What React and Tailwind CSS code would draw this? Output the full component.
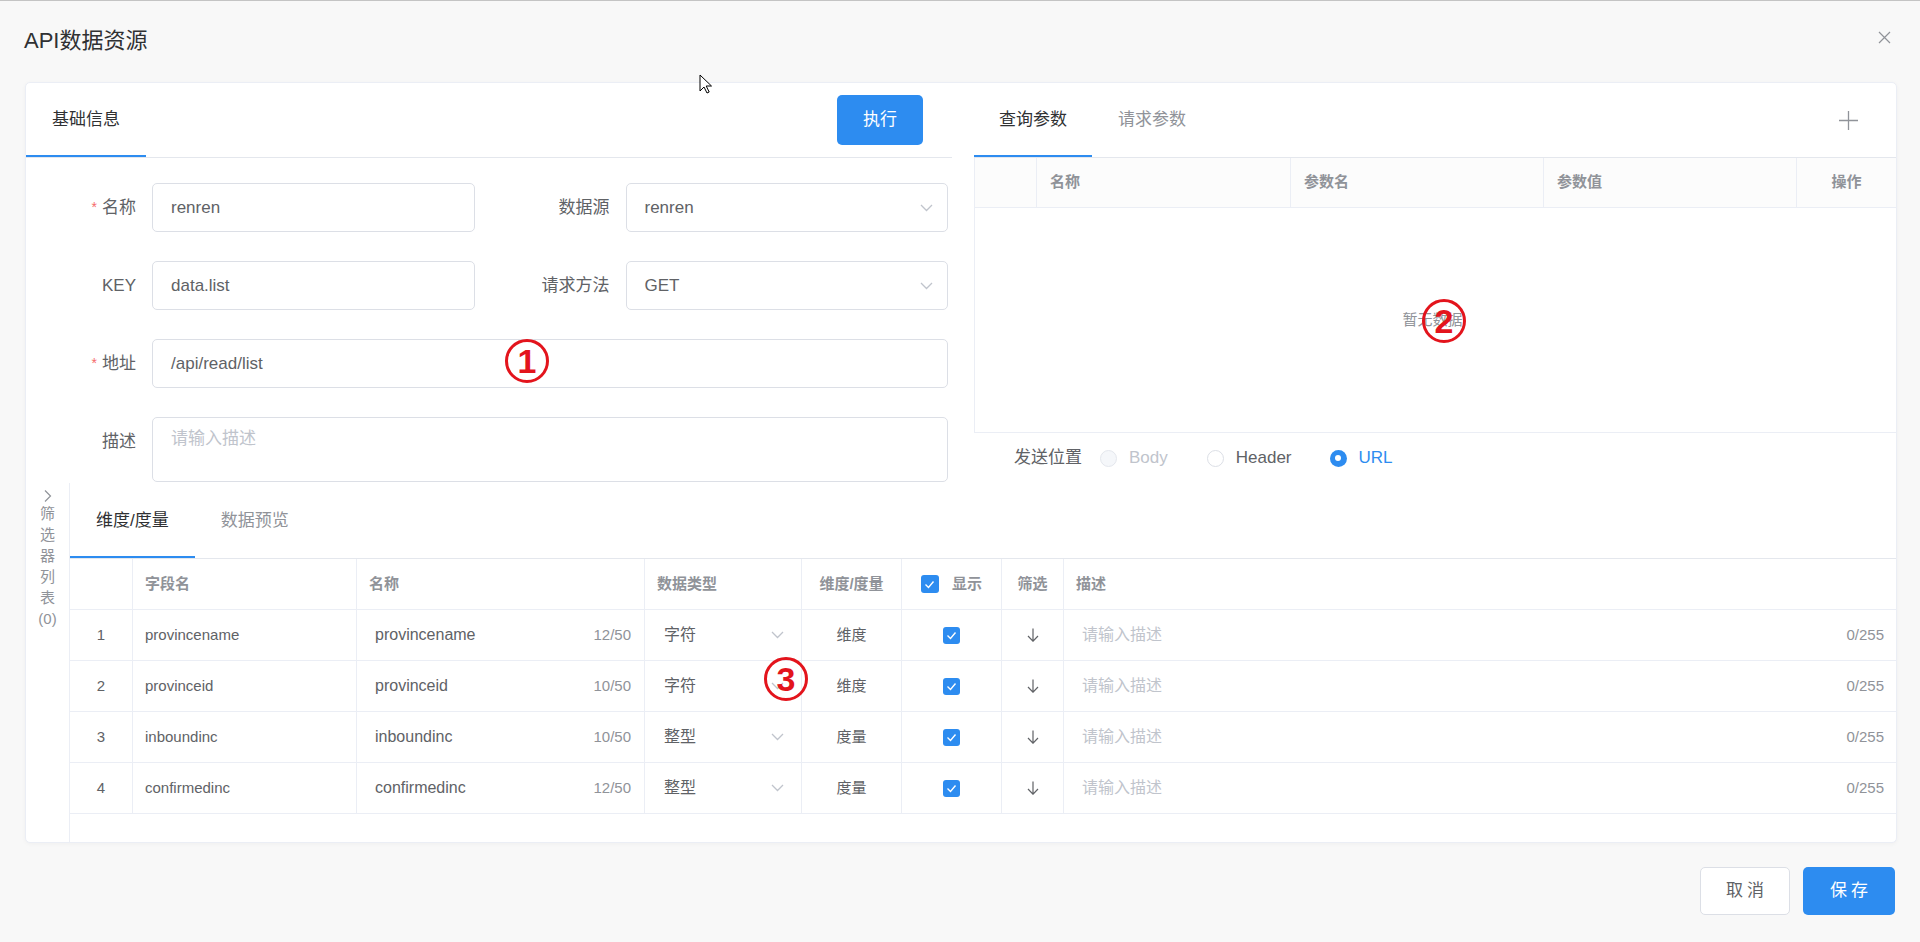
import React from "react";

const ChevronDown = ({ className = "" }) => (
  <svg className={className} width="13" height="8" viewBox="0 0 13 8" fill="none">
    <path d="M1 1l5.5 5.5L12 1" stroke="#c0c4cc" strokeWidth="1.3" />
  </svg>
);

const Check = ({ size = 17 }) => (
  <span
    className="inline-flex items-center justify-center rounded-[3px] bg-[#2d8cf0]"
    style={{ width: size, height: size }}
  >
    <svg width="11" height="9" viewBox="0 0 11 9" fill="none">
      <path d="M1.5 4.5l3 3 5-6" stroke="#fff" strokeWidth="1.4" />
    </svg>
  </span>
);

const ArrowDown = () => (
  <svg width="12" height="14" viewBox="0 0 12 14" fill="none">
    <path d="M6 0.5v12.5M1 8l5 5.2L11 8" stroke="#606266" strokeWidth="1.2" />
  </svg>
);

const Marker = ({ n, className }) => (
  <div
    className={
      "absolute w-[44px] h-[44px] rounded-full border-[3px] border-[#e3141c] flex items-center justify-center text-[#e3141c] text-[34px] leading-none font-semibold font-['Liberation_Sans',sans-serif] " +
      className
    }
  >
    {n}
  </div>
);

const Field = ({ label, required, children, full }) => (
  <div className={"flex " + (full ? "col-span-2" : "")}>
    <div className="w-[126px] h-[49px] shrink-0 flex items-center justify-end pr-[16px] text-[17px] text-[#606266]">
      {required && <span className="text-[#f56c6c] mr-[5px] text-[14px]">*</span>}
      {label}
    </div>
    <div className="flex-1">{children}</div>
  </div>
);

const Input = ({ value }) => (
  <div className="h-[49px] border border-[#dcdfe6] rounded-[5px] pl-[18px] flex items-center text-[17px] text-[#606266]">
    {value}
  </div>
);

const Select = ({ value }) => (
  <div className="h-[49px] border border-[#dcdfe6] rounded-[5px] pl-[18px] pr-[14px] flex items-center justify-between text-[17px] text-[#606266]">
    <span>{value}</span>
    <ChevronDown />
  </div>
);

const rows = [
  { id: 1, field: "provincename", count: "12/50", type: "字符", kind: "维度" },
  { id: 2, field: "provinceid", count: "10/50", type: "字符", kind: "维度" },
  { id: 3, field: "inboundinc", count: "10/50", type: "整型", kind: "度量" },
  { id: 4, field: "confirmedinc", count: "12/50", type: "整型", kind: "度量" },
];

export default function App() {
  return (
    <div className="relative w-[1920px] h-[942px] overflow-hidden bg-[#f8f8f8] border-t border-[#c4c4c4] font-['Liberation_Sans','Noto_Sans_CJK_SC',sans-serif]">
      {/* header */}
      <div className="h-[81px] flex items-center justify-between pl-[24px] pr-[29px]">
        <div className="text-[22px] text-[#303133] -mt-[2px]">API数据资源</div>
        <svg width="13" height="13" viewBox="0 0 13 13" className="-mt-[8px]">
          <path d="M1 1l11 11M12 1L1 12" stroke="#909399" strokeWidth="1.2" />
        </svg>
      </div>

      {/* card */}
      <div className="ml-[25px] w-[1872px] h-[761px] bg-white border border-[#ebeef5] rounded-[5px] shadow-[0_1px_4px_rgba(0,0,0,0.04)] flex flex-col">
        <div className="h-[400px] flex">
          {/* left panel */}
          <div className="w-[926px] shrink-0 flex flex-col">
            <div className="h-[75px] border-b border-[#e4e7ed] flex items-center justify-between pr-[29px]">
              <div className="relative h-full px-[26px] flex items-center text-[17px] text-[#303133]">
                基础信息
                <div className="absolute left-0 right-0 bottom-0 h-[2px] bg-[#2d8cf0]" />
              </div>
              <button className="w-[86px] h-[50px] rounded-[5px] bg-[#2d8cf0] text-white text-[17px]">执行</button>
            </div>
            <div className="w-[922px] pt-[25px] grid grid-cols-2 gap-x-[25px] gap-y-[29px]">
              <Field label="名称" required>
                <Input value="renren" />
              </Field>
              <Field label="数据源">
                <Select value="renren" />
              </Field>
              <Field label="KEY">
                <Input value="data.list" />
              </Field>
              <Field label="请求方法">
                <Select value="GET" />
              </Field>
              <Field label="地址" required full>
                <Input value="/api/read/list" />
              </Field>
              <Field label="描述" full>
                <div className="h-[65px] border border-[#dcdfe6] rounded-[5px] pl-[18px] pt-[8px] text-[17px] text-[#c0c4cc]">
                  请输入描述
                </div>
              </Field>
            </div>
          </div>

          {/* right panel */}
          <div className="ml-[22px] flex-1 flex flex-col">
            <div className="h-[75px] border-b border-[#e4e7ed] flex items-center justify-between pr-[38px]">
              <div className="flex h-full">
                <div className="relative h-full px-[25px] flex items-center text-[17px] text-[#303133]">
                  查询参数
                  <div className="absolute left-0 right-0 bottom-0 h-[2px] bg-[#2d8cf0]" />
                </div>
                <div className="h-full px-[26px] flex items-center text-[17px] text-[#909399]">请求参数</div>
              </div>
              <svg width="19" height="19" viewBox="0 0 19 19">
                <path d="M9.5 0v19M0 9.5h19" stroke="#909399" strokeWidth="1.3" />
              </svg>
            </div>
            <div className="border-l border-[#ebeef5]">
              <div className="h-[50px] border-b border-[#ebeef5] bg-[#fcfcfc] flex text-[15px] font-bold text-[#909399]">
                <div className="w-[61px]" />
                <div className="w-[254px] border-l border-[#ebeef5] pl-[13px] flex items-center">名称</div>
                <div className="w-[253px] border-l border-[#ebeef5] pl-[13px] flex items-center">参数名</div>
                <div className="w-[253px] border-l border-[#ebeef5] pl-[13px] flex items-center">参数值</div>
                <div className="flex-1 border-l border-[#ebeef5] flex items-center justify-center">操作</div>
              </div>
              <div className="h-[225px] border-b border-[#ebeef5] flex items-center justify-center text-[15px] text-[#909399] pr-[6px]">
                暂无数据
              </div>
            </div>
            <div className="flex-1 pl-[40px] flex items-center text-[17px]">
              <span className="text-[#606266] mr-[18px]">发送位置</span>
              <span className="w-[17px] h-[17px] rounded-full border border-[#e4e7ed] bg-[#f5f7fa] mr-[12px]" />
              <span className="text-[#c0c4cc] mr-[39px]">Body</span>
              <span className="w-[17px] h-[17px] rounded-full border border-[#dcdfe6] bg-white mr-[12px]" />
              <span className="text-[#606266] mr-[38px]">Header</span>
              <span className="w-[17px] h-[17px] rounded-full bg-[#2d8cf0] flex items-center justify-center mr-[12px]">
                <span className="w-[6px] h-[6px] rounded-full bg-white" />
              </span>
              <span className="text-[#2d8cf0]">URL</span>
            </div>
          </div>
        </div>

        {/* bottom */}
        <div className="flex-1 flex">
          <div className="w-[44px] shrink-0 border-r border-[#ebeef5] pt-[6px] flex flex-col items-center text-[15px] leading-[21px] text-[#909399]">
            <svg width="8" height="14" viewBox="0 0 8 14" fill="none">
              <path d="M1 1.5l5.5 5.5L1 12.5" stroke="#909399" strokeWidth="1.2" />
            </svg>
            <span>筛</span>
            <span>选</span>
            <span>器</span>
            <span>列</span>
            <span>表</span>
            <span>(0)</span>
          </div>
          <div className="flex-1 flex flex-col">
            <div className="h-[76px] border-b border-[#e4e7ed] flex">
              <div className="relative h-full px-[26px] flex items-center text-[17px] text-[#303133]">
                维度/度量
                <div className="absolute left-0 right-0 bottom-0 h-[2px] bg-[#2d8cf0]" />
              </div>
              <div className="h-full px-[26px] flex items-center text-[17px] text-[#909399]">数据预览</div>
            </div>
            <div className="h-[51px] border-b border-[#ebeef5] flex text-[15px] font-bold text-[#909399]">
              <div className="w-[62px]" />
              <div className="w-[224px] border-l border-[#ebeef5] pl-[12px] flex items-center">字段名</div>
              <div className="w-[288px] border-l border-[#ebeef5] pl-[12px] flex items-center">名称</div>
              <div className="w-[157px] border-l border-[#ebeef5] pl-[12px] flex items-center">数据类型</div>
              <div className="w-[100px] border-l border-[#ebeef5] flex items-center justify-center">维度/度量</div>
              <div className="w-[100px] border-l border-[#ebeef5] flex items-center justify-center gap-[13px]">
                <Check size={18} />
                <span>显示</span>
              </div>
              <div className="w-[62px] border-l border-[#ebeef5] flex items-center justify-center">筛选</div>
              <div className="flex-1 border-l border-[#ebeef5] pl-[12px] flex items-center">描述</div>
            </div>
            {rows.map((r) => (
              <div key={r.id} className="h-[51px] border-b border-[#ebeef5] flex text-[15px] text-[#606266]">
                <div className="w-[62px] flex items-center justify-center">{r.id}</div>
                <div className="w-[224px] border-l border-[#ebeef5] pl-[12px] flex items-center">{r.field}</div>
                <div className="w-[288px] border-l border-[#ebeef5] pl-[18px] pr-[13px] flex items-center justify-between">
                  <span className="text-[16px]">{r.field}</span>
                  <span className="text-[#909399]">{r.count}</span>
                </div>
                <div className="w-[157px] border-l border-[#ebeef5] pl-[19px] pr-[17px] flex items-center justify-between">
                  <span className="text-[16px]">{r.type}</span>
                  <ChevronDown />
                </div>
                <div className="w-[100px] border-l border-[#ebeef5] flex items-center justify-center">{r.kind}</div>
                <div className="w-[100px] border-l border-[#ebeef5] flex items-center justify-center">
                  <Check />
                </div>
                <div className="w-[62px] border-l border-[#ebeef5] flex items-center justify-center">
                  <ArrowDown />
                </div>
                <div className="flex-1 border-l border-[#ebeef5] pl-[18px] pr-[12px] flex items-center justify-between">
                  <span className="text-[16px] text-[#c0c4cc]">请输入描述</span>
                  <span className="text-[#909399]">0/255</span>
                </div>
              </div>
            ))}
          </div>
        </div>
      </div>

      {/* footer */}
      <div className="mt-[24px] pr-[25px] flex justify-end gap-[13px]">
        <button className="w-[90px] h-[48px] rounded-[5px] border border-[#dcdfe6] bg-white text-[17px] text-[#606266] tracking-[4px] pl-[4px]">
          取消
        </button>
        <button className="w-[92px] h-[48px] rounded-[5px] bg-[#2d8cf0] text-[17px] text-white tracking-[4px] pl-[4px]">
          保存
        </button>
      </div>

      {/* annotations */}
      <Marker n="1" className="left-[505px] top-[338px]" />
      <Marker n="2" className="left-[1422px] top-[298px]" />
      <Marker n="3" className="left-[764px] top-[656px]" />

      {/* mouse cursor */}
      <svg className="absolute left-[699px] top-[73px]" width="13" height="20" viewBox="0 0 13 20">
        <path d="M1 1v16l4-4 3 6 2.2-1-3-6H12.5z" fill="#fff" stroke="#000" strokeWidth="1" strokeLinejoin="round" />
      </svg>
    </div>
  );
}
